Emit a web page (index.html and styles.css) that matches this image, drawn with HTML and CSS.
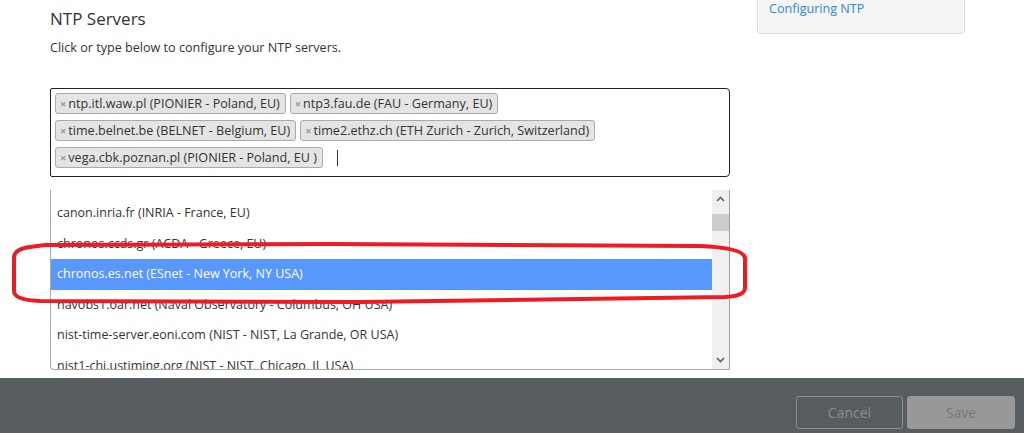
FILE: index.html
```html
<!DOCTYPE html>
<html>
<head>
<meta charset="utf-8">
<link rel="stylesheet" href="styles.css">
</head>
<body>
<div class="page">
  <div class="content">
    <div class="main">
      <h2 class="title">NTP Servers</h2>
      <p class="hint">Click or type below to configure your NTP servers.</p>
      <div class="tagbox">
        <span class="tag"><span class="x">×</span>ntp.itl.waw.pl (PIONIER - Poland, EU)</span>
        <span class="tag"><span class="x">×</span>ntp3.fau.de (FAU - Germany, EU)</span>
        <span class="tag"><span class="x">×</span>time.belnet.be (BELNET - Belgium, EU)</span>
        <span class="tag"><span class="x">×</span>time2.ethz.ch (ETH Zurich - Zurich, Switzerland)</span>
        <span class="tag"><span class="x">×</span>vega.cbk.poznan.pl (PIONIER - Poland, EU )</span>
        <span class="caret"></span>
      </div>
      <div class="listbox">
        <ul class="options">
          <li>canon.inria.fr (INRIA - France, EU)</li>
          <li>chronos.ccds.gr (ACDA - Greece, EU)</li>
          <li class="active">chronos.es.net (ESnet - New York, NY USA)</li>
          <li>navobs1.oar.net (Naval Observatory - Columbus, OH USA)</li>
          <li>nist-time-server.eoni.com (NIST - NIST, La Grande, OR USA)</li>
          <li>nist1-chi.ustiming.org (NIST - NIST, Chicago, IL USA)</li>
        </ul>
        <div class="scrollbar">
          <svg class="arrow" width="9" height="6" viewBox="0 0 9 6"><path d="M1 5 L4.5 1.5 L8 5" fill="none" stroke="#606060" stroke-width="1.6"/></svg>
          <div class="thumb"></div>
          <div class="track"></div>
          <svg class="arrow" width="9" height="6" viewBox="0 0 9 6"><path d="M1 1 L4.5 4.5 L8 1" fill="none" stroke="#606060" stroke-width="1.6"/></svg>
        </div>
      </div>
    </div>
    <aside class="side">
      <a class="side-link" href="#">Configuring NTP</a>
    </aside>
  </div>
  <footer class="footer">
    <button class="btn cancel">Cancel</button>
    <button class="btn save">Save</button>
  </footer>
  <svg class="annot" width="1024" height="433" viewBox="0 0 1024 433">
    <path d="M45 245 L330 244 L700 246 Q744 248 745 258 L745 288 Q745 296 725 297 L360 302 L40 301 Q14 300 14 291 L14 258 Q14 249 30 247 Z" fill="none" stroke="#ed1c24" stroke-width="4"/>
  </svg>
</div>
</body>
</html>
```
FILE: styles.css
```css
* { box-sizing: border-box; }
html, body { margin: 0; padding: 0; }
body {
  font-family: "Open Sans", "Liberation Sans", sans-serif;
  color: #333;
  background: #fff;
  width: 1024px;
  height: 433px;
  overflow: hidden;
}
.page {
  position: relative;
  height: 433px;
  display: flex;
  flex-direction: column;
}
.content {
  display: flex;
  flex: 1;
}
.main {
  margin-left: 50px;
  width: 680px;
}
.title {
  font-size: 17px;
  font-weight: 400;
  margin: 7px 0 0 0;
  line-height: 24px;
  color: #333;
}
.hint {
  font-size: 12.6px;
  margin: 8px 0 0 0;
  line-height: 18px;
}
.tagbox {
  margin-top: 31px;
  height: 89px;
  border: 1px solid #222;
  border-radius: 2px 4px 4px 2px;
  padding: 4px 4px 0 4px;
  display: flex;
  flex-wrap: wrap;
  align-content: flex-start;
  column-gap: 4px;
  row-gap: 6px;
}
.tag {
  display: inline-flex;
  align-items: center;
  height: 21px;
  padding: 0 5px 0 4px;
  background: #e4e4e4;
  border: 1px solid #aaa;
  border-radius: 3px;
  font-size: 12.6px;
  color: #333;
  white-space: nowrap;
}
.tag .x {
  color: #999;
  font-size: 11px;
  margin-right: 2px;
  font-weight: 700;
}
.caret {
  width: 1px;
  height: 16px;
  background: #333;
  margin: 3px 0 0 10px;
}
.listbox {
  margin-top: 13px;
  height: 180px;
  display: flex;
  border-left: 1px solid #aaa;
  border-bottom: 1px solid #aaa;
  border-right: 1px solid #a0a0a0;
  border-radius: 0 0 0 4px;
  overflow: hidden;
}
.options {
  list-style: none;
  margin: 0;
  padding: 8px 0 0 0;
  flex: 1;
  overflow: hidden;
}
.options li {
  font-size: 12.5px;
  line-height: 18px;
  padding: 6px 6px 6px 6px;
  height: 30.5px;
  white-space: nowrap;
  color: #333;
}
.options li.active {
  background: #5897fb;
  color: #fff;
}
.scrollbar {
  width: 17px;
  background: #f0f0f0;
  display: flex;
  flex-direction: column;
  align-items: center;
}
.arrow { margin: 6px 0; flex: none; }
.thumb {
  width: 17px;
  height: 17px;
  background: #cdcdcd;
  margin-top: 6px;
}
.track { flex: 1; }
.side {
  margin-left: 27px;
  width: 208px;
  height: 34px;
  background: #f5f5f5;
  border: 1px solid #ddd;
  border-top: none;
  border-radius: 0 0 4px 4px;
  padding: 0 0 0 11px;
}
.side-link {
  display: block;
  font-size: 12.6px;
  line-height: 18px;
  margin-top: 0;
  color: #2f86e0;
  text-decoration: none;
}
.footer {
  height: 55px;
  background: #575c60;
  display: flex;
  justify-content: flex-end;
  align-items: flex-start;
  padding: 18px 9px 0 0;
  gap: 4px;
}
.btn {
  width: 108px;
  height: 33px;
  border-radius: 3px;
  font-family: "Open Sans", "Liberation Sans", sans-serif;
  font-size: 14px;
}
.cancel {
  background: transparent;
  border: 1px solid #8a8e91;
  color: #8a8e91;
  width: 107px;
}
.save {
  background: #989898;
  border: 1px solid #989898;
  color: #777;
}
.annot {
  position: absolute;
  left: 0;
  top: 0;
  pointer-events: none;
}
```
